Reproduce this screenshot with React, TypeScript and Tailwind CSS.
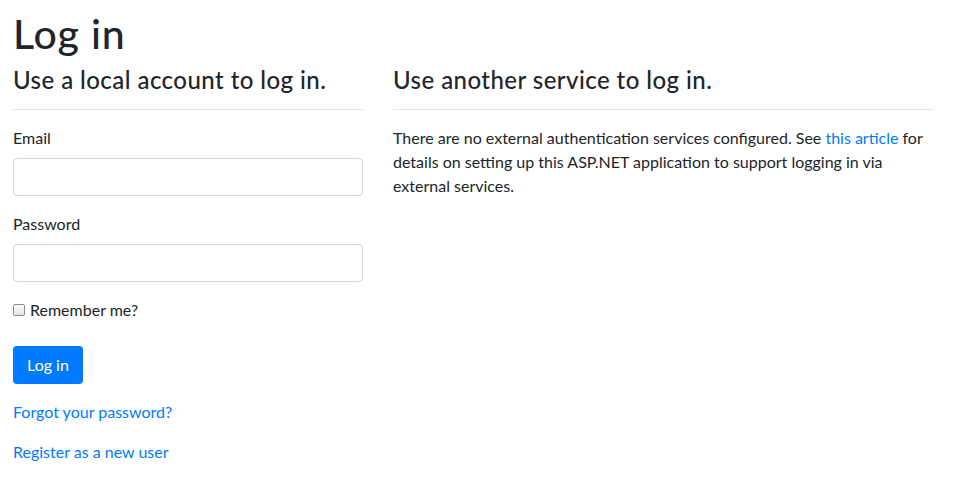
export default function App() {
  return (
    <div className="min-h-screen bg-white px-[13px] pt-2 text-[16px] leading-6 text-[#212529] font-['Lato',sans-serif]">
      <h1 className="mb-1 text-[41px] leading-[52px] font-medium tracking-[0.8px]">Log in</h1>
      <div className="flex">
        <section className="w-[350px] shrink-0">
          <h4 className="text-[24px] leading-[32.8px] font-medium tracking-[0.45px]">Use a local account to log in.</h4>
          <hr className="mt-3 mb-4 border-t border-black/10" />
          <form>
            <div className="mb-4">
              <label className="mb-2 block">Email</label>
              <input
                type="email"
                className="block h-[38px] w-full rounded border border-[#ced4da] px-3 py-1.5 outline-none"
              />
            </div>
            <div className="mb-4">
              <label className="mb-2 block">Password</label>
              <input
                type="password"
                className="block h-[38px] w-full rounded border border-[#ced4da] px-3 py-1.5 outline-none"
              />
            </div>
            <div className="mb-6">
              <label className="flex items-center">
                <span className="mr-[5px] inline-block h-[12px] w-[12px] rounded-[2px] border border-[#8f8f8f] bg-gradient-to-b from-[#fbfbfb] to-[#e6e6e6]" />
                Remember me?
              </label>
            </div>
            <div className="mb-4">
              <button
                type="button"
                className="h-[38px] rounded bg-[#007bff] px-[14px] text-white"
              >
                Log in
              </button>
            </div>
            <p className="mb-4">
              <a className="text-[#007bff]" href="#">Forgot your password?</a>
            </p>
            <p className="mb-4">
              <a className="text-[#007bff]" href="#">Register as a new user</a>
            </p>
          </form>
        </section>
        <section className="ml-[30px] w-[540px] shrink-0">
          <h4 className="text-[24px] leading-[32.8px] font-medium tracking-[0.45px]">Use another service to log in.</h4>
          <hr className="mt-3 mb-4 border-t border-black/10" />
          <p>
            There are no external authentication services configured. See{" "}
            <a className="text-[#007bff]" href="#">this article</a> for details on setting up this ASP.NET
            application to support logging in via external services.
          </p>
        </section>
      </div>
    </div>
  );
}
